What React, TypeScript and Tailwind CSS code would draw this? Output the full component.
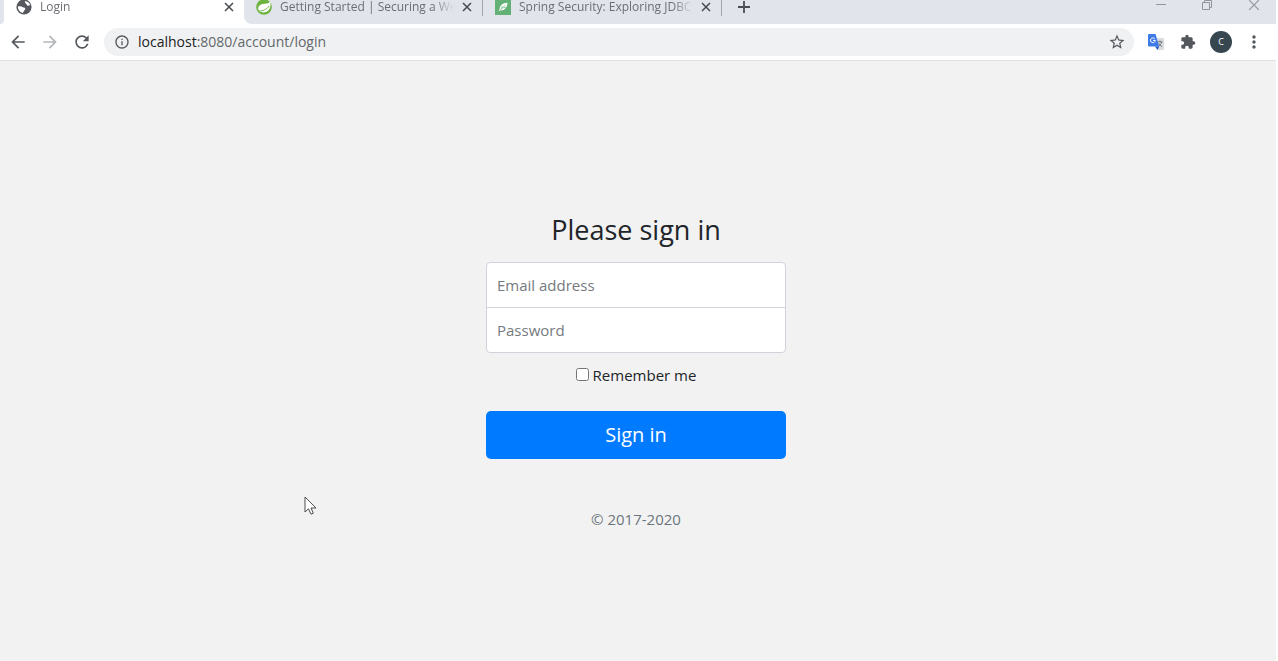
import type { ReactNode } from 'react'
import {
  MdArrowBack,
  MdArrowForward,
  MdExtension,
  MdInfoOutline,
  MdMoreVert,
  MdRefresh,
  MdStarBorder,
} from 'react-icons/md'

function GlobeIcon() {
  return (
    <svg viewBox="0 0 16 16" className="size-4" aria-hidden="true">
      <circle cx="8" cy="8" r="7.6" fill="#55595d" />
      <path
        d="M8.600 1.900C9.500 3 8.800 4 10 4.700c1 .6.600 1.700 1.700 2 .9.2 1.500-.6 2.500-.3-.3-2.300-2.400-4.300-5.600-4.500Z"
        fill="#fff"
      />
      <path
        d="M1.900 7.600c1.600-.5 3.600-.4 4.600.5.9.8 2.200.3 2.700 1.300.5 1-.8 1.500-1.200 2.500-.3.8-.9 1-1.200 2.100C4 13.500 1.900 11 1.900 7.600Z"
        fill="#fff"
      />
    </svg>
  )
}

function SpringIcon() {
  return (
    <svg viewBox="0 0 16 16" className="size-4" aria-hidden="true">
      <circle cx="8" cy="8" r="7.8" fill="#6db33f" />
      <path
        d="M14 2.2c-.7 1.5-1.600 2.100-3.300 2.300-2.700.3-5.300.2-7.200 1.900-1.700 1.600-1.700 4.300-.1 5.800 2 1.800 6.300 1.500 8.700-.5C14.700 9.500 14.900 5.200 14 2.200Z"
        fill="#fff"
      />
      <path d="M3 12c3.800 0 7.600-1.200 10-5" fill="none" stroke="#6db33f" strokeWidth="1" />
    </svg>
  )
}

function LeafIcon() {
  return (
    <svg viewBox="0 0 16 16" className="size-4" aria-hidden="true">
      <path d="M0 0h16v16H0z" fill="#63b175" />
      <path d="M12.500 3.800C8 4 4.600 6.300 4.500 10.600L3.600 12.600l1.600-1.100c4.200.2 7-2.500 7.300-7.700Z" fill="#fff" />
      <path d="M4.800 11.300 10.500 6M7 9.800V6.800M8.500 8.600h2.500" fill="none" stroke="#63b175" strokeWidth=".7" />
    </svg>
  )
}

function TranslateIcon() {
  return (
    <svg viewBox="0 0 16 16" className="size-4" aria-hidden="true">
      <path d="M6 4h9a1 1 0 0 1 1 1v10a1 1 0 0 1-1 1H9.500Z" fill="#dadce0" />
      <path d="M9.500 7.800h5M12 6.500v1.300M13.600 8c-.5 2-1.900 3.600-3.500 4.500M10.700 9.300c.7 1.500 1.800 2.500 3.400 3.400" fill="none" stroke="#75797e" strokeWidth="1" />
      <path d="M7 12.500h4.200L9.500 16Z" fill="#2457c5" />
      <path d="M1 0h6.500l3.700 12.500H1a1 1 0 0 1-1-1V1a1 1 0 0 1 1-1Z" fill="#3f7be8" />
      <path d="M6.700 4.700a2.400 2.400 0 1 0 .6 1.700H5" fill="none" stroke="#fff" strokeWidth="1" />
    </svg>
  )
}

function CloseIcon({ className = '' }: { className?: string }) {
  return (
    <svg viewBox="0 0 10 10" className={className} fill="none" stroke="currentColor" aria-hidden="true">
      <path d="m1 1 8 8M9 1 1 9" />
    </svg>
  )
}

interface TabProps {
  icon: ReactNode
  title: string
}

function Tab({ icon, title }: TabProps) {
  return (
    <div className="flex h-3.5 min-w-0 flex-1 items-center pr-2.5 pl-3">
      <span className="shrink-0">{icon}</span>
      <span className="ml-2 min-w-0 flex-1 overflow-x-clip text-[12px] leading-[14px] whitespace-nowrap text-[#6b6f74] [mask-image:linear-gradient(to_right,black_88%,transparent)]">
        {title}
      </span>
      <button type="button" aria-label={`Close ${title}`} className="ml-2 shrink-0 text-[#45494d]">
        <CloseIcon className="size-2.5 stroke-[1.5]" />
      </button>
    </div>
  )
}

function TabStrip() {
  return (
    <div className="flex h-6 overflow-hidden bg-white">
      <div className="w-1 rounded-br-sm bg-[#e1e4ea]" />
      <div className="flex w-60">
        <Tab icon={<GlobeIcon />} title="Login" />
      </div>
      <div className="flex flex-1 rounded-bl-lg bg-[#e1e4ea]">
        <div className="flex h-4 w-[239px] border-r border-[#a3a7ad]">
          <Tab icon={<SpringIcon />} title="Getting Started | Securing a Web Application" />
        </div>
        <div className="flex h-4 w-[239px] border-r border-[#a3a7ad]">
          <Tab icon={<LeafIcon />} title="Spring Security: Exploring JDBC Authentication" />
        </div>
        <button type="button" aria-label="New tab" className="ml-4 flex h-3.5 items-center text-[#4a4e52]">
          <svg viewBox="0 0 12 12" className="size-3" fill="none" stroke="currentColor" strokeWidth="1.8">
            <path d="M6 0v12M0 6h12" />
          </svg>
        </button>
        <div className="ml-auto flex h-2.5 items-center gap-9 pr-4 text-[#92959b]">
          <button type="button" aria-label="Minimize">
            <svg viewBox="0 0 10 10" className="size-2.5" fill="none" stroke="currentColor">
              <path d="M0 4.500h10" />
            </svg>
          </button>
          <button type="button" aria-label="Restore">
            <svg viewBox="0 0 10 10" className="size-2.5" fill="none" stroke="currentColor">
              <path d="M.5 2.500h7v7h-7zM2.500 2.500v-2h7v7h-2" />
            </svg>
          </button>
          <button type="button" aria-label="Close window">
            <CloseIcon className="size-3" />
          </button>
        </div>
      </div>
    </div>
  )
}

function Toolbar() {
  return (
    <div className="flex h-9 items-center bg-white pr-3 pl-2 text-[#54585c]">
      <div className="flex gap-3">
        <button type="button" aria-label="Back">
          <MdArrowBack className="size-5" />
        </button>
        <button type="button" aria-label="Forward" className="text-[#b4b6b9]">
          <MdArrowForward className="size-5" />
        </button>
        <button type="button" aria-label="Reload">
          <MdRefresh className="size-5" />
        </button>
      </div>
      <div className="ml-3 flex h-7 flex-1 items-center rounded-full bg-[#f0f1f2] pr-2 pl-2.5">
        <MdInfoOutline className="size-4 shrink-0" />
        <div className="ml-2 flex-1 text-[14px] leading-5 text-[#63676b]">
          <span className="text-[#202124]">localhost</span>:8080/account/login
        </div>
        <button type="button" aria-label="Bookmark this page">
          <MdStarBorder className="size-[18px]" />
        </button>
      </div>
      <div className="ml-3 flex items-center gap-3">
        <button type="button" aria-label="Translate" className="flex size-5 items-center justify-center">
          <TranslateIcon />
        </button>
        <button type="button" aria-label="Extensions" className="flex size-5 items-center justify-center">
          <MdExtension className="size-4" />
        </button>
        <button type="button" aria-label="Profile" className="size-[22px] rounded-full bg-[#37474f] text-[9px] leading-5 text-white">
          C
        </button>
        <button type="button" aria-label="Menu">
          <MdMoreVert className="size-5" />
        </button>
      </div>
    </div>
  )
}

function SignInForm() {
  const inputClass =
    'relative block h-[46px] w-full border border-[#ced4da] bg-white px-2.5 text-[15px] text-[#495057] placeholder-[#757a80] outline-none focus:z-10'

  return (
    <form className="w-[300px] text-center text-[15px] leading-6 text-[#212529]">
      <h1 className="mb-3.5 text-[27px] leading-9">Please sign in</h1>
      <label htmlFor="email" className="sr-only">
        Email address
      </label>
      <input id="email" type="email" placeholder="Email address" className={`${inputClass} -mb-px rounded-t`} />
      <label htmlFor="password" className="sr-only">
        Password
      </label>
      <input id="password" type="password" placeholder="Password" className={`${inputClass} mb-2.5 rounded-b`} />
      <label className="mb-6 flex items-center justify-center gap-1">
        <input type="checkbox" className="size-[13px]" />
        Remember me
      </label>
      <button type="submit" className="h-12 w-full rounded-[5px] bg-[#007bff] text-[20px] text-white">
        Sign in
      </button>
      <p className="mt-12 text-[15px] text-[#6c757d]">&copy; 2017-2020</p>
    </form>
  )
}

export default function App() {
  return (
    <div className="relative flex min-h-screen flex-col border-r-2 border-white bg-[#f2f2f2] font-['Open_Sans','Noto_Sans',sans-serif]">
      <header className="border-b border-[#dfe1e3]">
        <TabStrip />
        <Toolbar />
      </header>
      <main className="flex flex-1 items-center justify-center pt-5 pr-1">
        <SignInForm />
      </main>
      <svg viewBox="0 0 13 20" className="pointer-events-none absolute top-[496px] left-[304px] h-5 w-[13px]" aria-hidden="true">
        <path
          d="M1 1v15l3.500-3.200L7 18.200l2.300-1-2.300-5.200h5Z"
          fill="#fff"
          stroke="#4d4d4d"
          strokeWidth="1"
        />
      </svg>
    </div>
  )
}
